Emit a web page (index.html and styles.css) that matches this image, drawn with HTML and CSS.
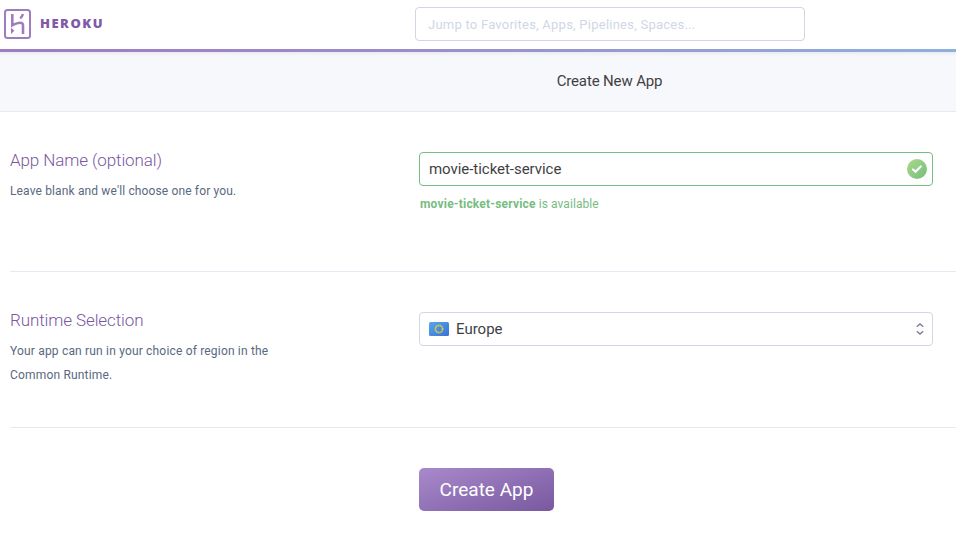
FILE: index.html
```html
<!DOCTYPE html>
<html lang="en">
<head>
<meta charset="utf-8">
<title>Create New App | Heroku</title>
<link rel="stylesheet" href="styles.css">
</head>
<body>
<header class="topbar">
  <a class="brand">
    <svg class="logo" width="27" height="30" viewBox="0 0 27 30">
      <rect x="1" y="1" width="25" height="28" rx="2.5" fill="none" stroke="#9e7cc1" stroke-width="2"/>
      <g fill="none" stroke="#9e7cc1" stroke-width="2.6">
        <path d="M8.3 5v11.300c3-1.400 5.400-2.500 7.700-2.500 2.300 0 3 1.200 3 2.700V25"/>
        <path d="M18.900 5c-.4 1.700-1.300 3.100-2.700 4.400" stroke-width="2.500"/>
      </g>
      <path fill="#9e7cc1" d="M7 18.500l3.400 3.200L7 25z"/>
    </svg>
    <span class="wordmark">HEROKU</span>
  </a>
  <div class="search"><span class="search-text">Jump to Favorites, Apps, Pipelines, Spaces...</span></div>
</header>
<div class="rainbow"></div>
<div class="subheader"><h1 class="page-title">Create New App</h1></div>
<main class="form">
  <section class="row row-name">
    <div class="info">
      <h2 class="label"><span class="label-name">App Name (optional)</span></h2>
      <p class="help"><span class="help-name">Leave blank and we'll choose one for you.</span></p>
    </div>
    <div class="control">
      <div class="field valid">
        <span class="value-name">movie-ticket-service</span>
        <svg class="check" width="20" height="20" viewBox="0 0 20 20">
          <defs><linearGradient id="ok" x1="0" y1="0" x2="1" y2="1"><stop offset="0" stop-color="#acd98d"/><stop offset="1" stop-color="#73bf78"/></linearGradient></defs>
          <circle cx="10" cy="10" r="10" fill="url(#ok)"/>
          <path d="M6 10.5l2.5 2.3L13.7 7.5" fill="none" stroke="#fff" stroke-width="2.2" stroke-linecap="round" stroke-linejoin="round"/>
        </svg>
      </div>
      <p class="status"><b class="status-name">movie-ticket-service</b> <span class="status-text">is available</span></p>
    </div>
  </section>
  <section class="row row-region">
    <div class="info">
      <h2 class="label"><span class="label-region">Runtime Selection</span></h2>
      <p class="help"><span class="help-region">Your app can run in your choice of region in the</span><br><span class="help-region">Common Runtime.</span></p>
    </div>
    <div class="control">
      <div class="field select">
        <svg class="flag" width="20" height="14" viewBox="0 0 20 14">
          <defs><linearGradient id="eu" x1="0" y1="0" x2="1" y2="1"><stop offset="0" stop-color="#55a7ee"/><stop offset="1" stop-color="#3873d5"/></linearGradient></defs>
          <rect width="20" height="14" rx="1.5" fill="url(#eu)"/>
          <circle cx="10" cy="7" r="3.6" fill="none" stroke="#e6d02c" stroke-width="1.700" stroke-dasharray="1.4 .485"/>
        </svg>
        <span class="value-region">Europe</span>
        <svg class="arrows" width="8" height="14" viewBox="0 0 8 14" fill="none" stroke="#817b94" stroke-width="1.4">
          <path d="M.8 4.8L4 2l3.200 2.800M.8 9.200L4 12l3.200-2.800"/>
        </svg>
      </div>
    </div>
  </section>
  <div class="actions"><button class="submit"><span class="submit-text">Create App</span></button></div>
</main>
</body>
</html>
```
FILE: styles.css
```css
* { box-sizing: border-box; }
body { margin: 0; background: #fff; font-family: Roboto, "Liberation Sans", sans-serif; color: #3f3f44; overflow: hidden; }
h1, h2, p { margin: 0; font-weight: 400; }
svg { display: block; flex: none; }
span, b { white-space: nowrap; }
.topbar { display: flex; height: 49px; padding: 7px 0 0 4px; }
.brand { display: flex; width: 411px; padding-top: 2px; }
.wordmark { margin-left: 9px; font: 800 13px/28px "Open Sans", sans-serif; letter-spacing: 1.5px; color: #7f5aa8; }
.search { width: 390px; height: 34px; padding-left: 12px; border: 1px solid #cfd7e6; border-radius: 4px; font-size: 13px; line-height: 33px; color: #cfd7e6; }
.search-text { letter-spacing: .24px; }
.rainbow { height: 3px; background: linear-gradient(90deg, #9e7cc1 0%, #9b8dca 43%, #8fb0dc 100%); }
.subheader { height: 60px; padding-left: 263px; border-bottom: 1px solid #e6e9f0; background: linear-gradient(#e9ebf1, #f7f8fc 4px); text-align: center; }
.page-title { font-size: 15px; line-height: 58px; letter-spacing: -.14px; }
.form { padding-left: 10px; }
.row { display: flex; border-bottom: 1px solid #e8e7f3; padding-top: 40px; }
.row-name { height: 160px; }
.row-region { height: 156px; }
.info { width: 409px; }
.label { font-size: 17px; font-weight: 300; line-height: 17px; letter-spacing: -.1px; color: #79589f; }
.help { margin-top: 10px; font-size: 12px; line-height: 24px; letter-spacing: .14px; color: #596981; }
.help-region { letter-spacing: .18px; }
.control { width: 514px; }
.field { display: flex; align-items: center; height: 34px; padding: 0 5px 0 9px; border: 1px solid #cfd7e6; border-radius: 4px; font-size: 15px; }
.value-name { letter-spacing: -.04px; }
.valid { border-color: #74bd83; }
.check { margin-left: auto; }
.select { padding-right: 8px; }
.value-region { margin-left: 7px; }
.arrows { margin-left: auto; }
.status { font-size: 12px; line-height: 16px; margin-top: 10px; padding-left: 1px; color: #78bc82; }
.status-name { font-weight: 700; letter-spacing: .2px; }
.status-text { letter-spacing: .07px; }
.actions { padding: 40px 0 0 409px; }
.submit { display: block; width: 135px; height: 43px; padding: 0; border: 0; border-radius: 5px; background: linear-gradient(160deg, #a88acb, #79589f); color: #fff; font: 400 19px Roboto, sans-serif; }
```
